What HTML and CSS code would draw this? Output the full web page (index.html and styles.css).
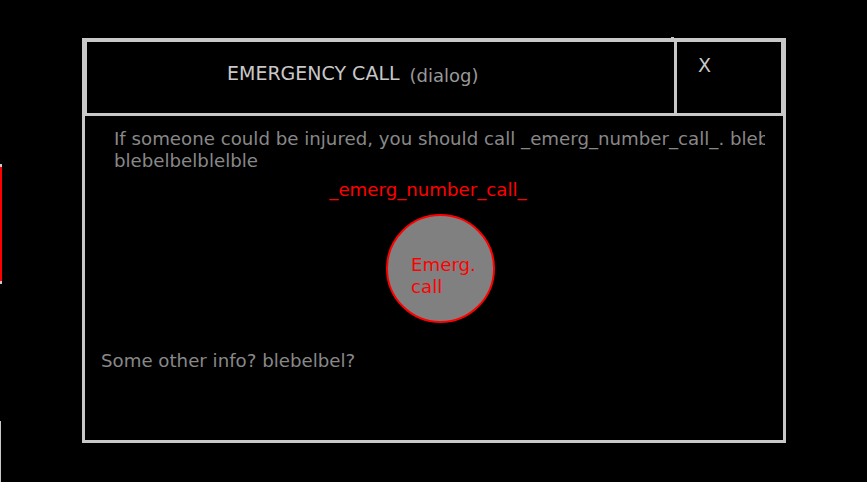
FILE: index.html
```html
<!DOCTYPE html>
<html>
<head>
<meta charset="utf-8">
<title>Emergency call</title>
<link rel="stylesheet" href="styles.css">
</head>
<body>
<div class="page">
  <div class="edge-red"></div>
  <div class="edge-gray"></div>
  <div class="tick"></div>
  <div class="dialog">
    <div class="header">
      <div class="title">EMERGENCY CALL<span class="sub">(dialog)</span></div>
      <div class="close">X</div>
    </div>
    <div class="content">
      <div class="clip">
        <p class="msg">If someone could be injured, you should call _emerg_number_call_. blebelbelblelble<br>blebelbelblelble</p>
      </div>
      <div class="number">_emerg_number_call_</div>
      <div class="call-btn">Emerg.<br>call</div>
      <p class="info">Some other info? blebelbel?</p>
    </div>
  </div>
</div>
</body>
</html>
```
FILE: styles.css
```css
html, body {
  margin: 0;
  padding: 0;
  background: #000;
}
body {
  font-family: "DejaVu Sans", "Liberation Sans", sans-serif;
  font-size: 18.2px;
  color: #888;
}
.page {
  position: relative;
  height: 482px;
  overflow: hidden;
  box-sizing: border-box;
  padding: 38px 0 0 82px;
}
.edge-red {
  position: absolute;
  left: 0;
  top: 164px;
  width: 2px;
  height: 114px;
  background: #f00;
  border-top: 3px solid #c8c8c8;
  border-bottom: 3px solid #c8c8c8;
}
.edge-gray {
  position: absolute;
  left: 0;
  top: 421px;
  width: 1px;
  height: 61px;
  background: #c8c8c8;
}
.tick {
  position: absolute;
  left: 671px;
  top: 37px;
  width: 3px;
  height: 1px;
  background: #c8c8c8;
}
.dialog {
  width: 704px;
  height: 405px;
  box-sizing: border-box;
  border: 3px solid #c8c8c8;
  display: flex;
  flex-direction: column;
}
.header {
  display: flex;
  height: 75px;
  box-sizing: border-box;
  border-style: solid;
  border-color: #c8c8c8;
  border-width: 1px 2px 3px 2px;
}
.title {
  flex: 1;
  padding: 20px 0 0 140px;
  font-size: 19px;
  color: #c8c8c8;
  white-space: nowrap;
}
.sub {
  font-size: 18px;
  color: #999;
  margin-left: 10px;
  vertical-align: -2px;
}
.close {
  width: 107px;
  border-left: 3px solid #c8c8c8;
  padding: 12px 0 0 21px;
  box-sizing: border-box;
  font-size: 19px;
  color: #c8c8c8;
}
.content {
  flex: 1;
  padding-top: 12px;
  display: flex;
  flex-direction: column;
  align-items: flex-start;
}
.clip {
  margin-left: 29px;
  width: 651px;
  overflow: hidden;
}
.msg {
  margin: 0;
  line-height: 22px;
  white-space: nowrap;
}
.number {
  align-self: stretch;
  margin-top: 7px;
  padding-right: 12px;
  text-align: center;
  line-height: 22px;
  color: #f00;
}
.call-btn {
  margin: 13px 0 0 301px;
  width: 109px;
  height: 109px;
  box-sizing: border-box;
  border: 2px solid #f00;
  border-radius: 50%;
  background: #808080;
  color: #f00;
  padding: 38px 0 0 23px;
  line-height: 21.5px;
}
.info {
  margin: 27px 0 0 16px;
  line-height: 22px;
}
```
